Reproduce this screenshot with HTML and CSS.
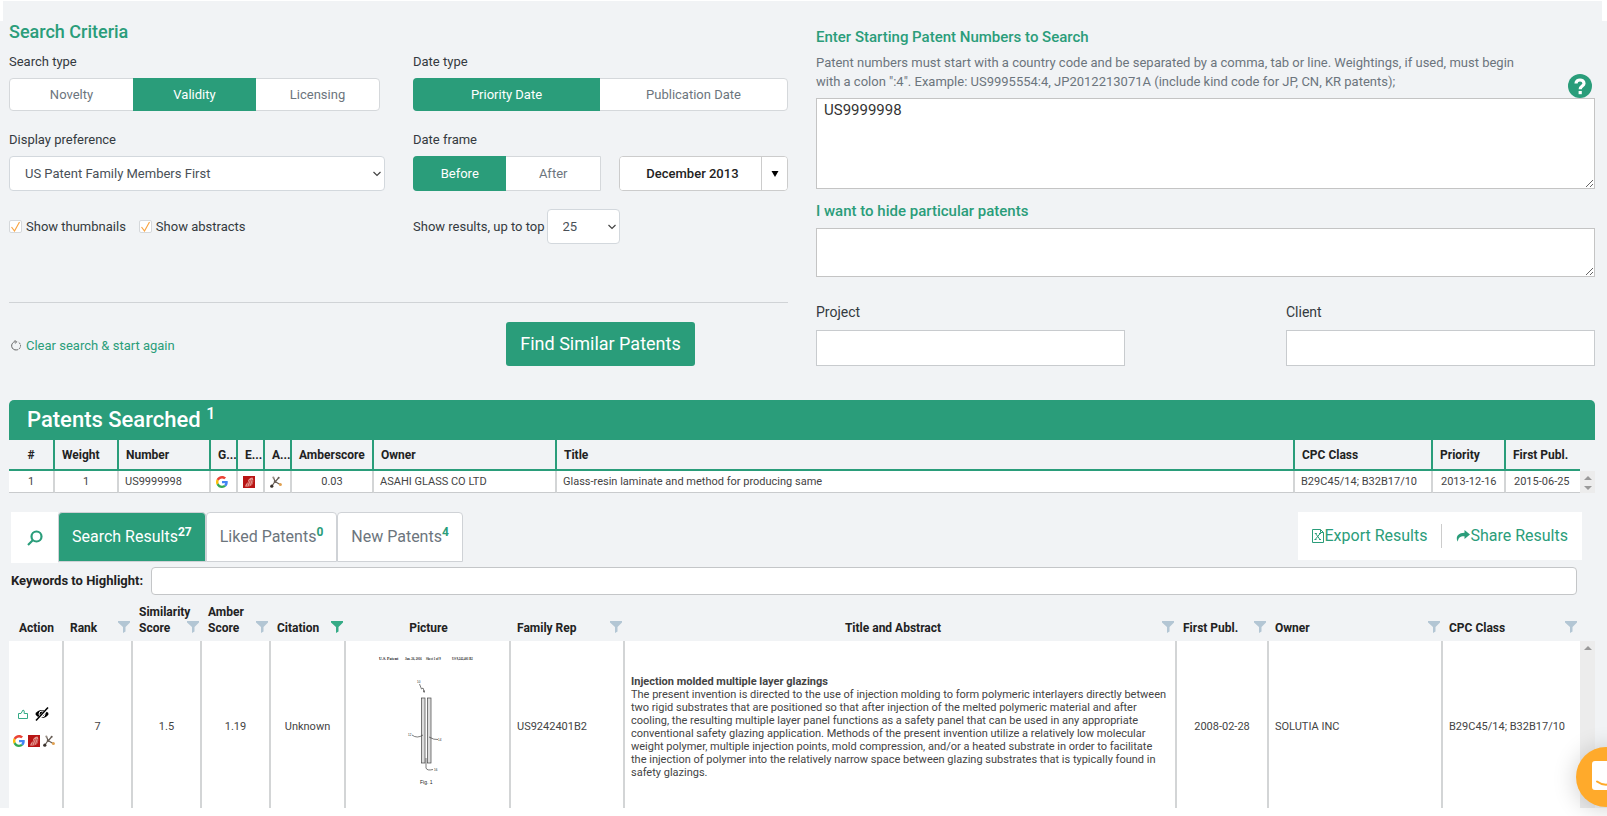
FILE: index.html
```
<!DOCTYPE html>
<html lang="en">
<head>
<meta charset="utf-8">
<title>Patent Search</title>
<link rel="stylesheet" href="styles.css">
</head>
<body>
<svg class="defs" aria-hidden="true">
  <symbol id="google" viewBox="0 0 48 48">
    <path fill="#ea4335" d="M24 9.500c3.500 0 6.700 1.200 9.200 3.600l6.900-6.900C35.900 2.400 30.500 0 24 0 14.600 0 6.500 5.400 2.600 13.200l8 6.200C12.400 13.700 17.700 9.500 24 9.500z"/>
    <path fill="#4285f4" d="M47 24.600c0-1.600-.2-3.100-.4-4.600H24v9h12.900c-.6 3-2.200 5.500-4.700 7.200l7.700 6C44.400 38 47 31.800 47 24.600z"/>
    <path fill="#fbbc05" d="M10.500 28.600c-.5-1.500-.8-3-.8-4.600s.3-3.100.8-4.600l-8-6.200C.9 16.500 0 20.100 0 24s.9 7.500 2.600 10.800z"/>
    <path fill="#34a853" d="M24 48c6.500 0 11.900-2.100 15.900-5.800l-7.700-6c-2.200 1.500-4.900 2.300-8.200 2.300-6.300 0-11.600-4.200-13.500-9.900l-8 6.200C6.500 42.600 14.600 48 24 48z"/>
  </symbol>
  <symbol id="espace" viewBox="0 0 12 12">
    <rect width="12" height="12" fill="#b81414"/>
    <path fill="#e39a92" d="M2 10.500C2.500 8.500 3.500 7 5 6.200 4.800 3.800 6 2 9.500 1.500 10.800 3.500 10.500 7 9 9 7 10.800 4 10.800 2 10.500z"/>
    <path fill="none" stroke="#b81414" stroke-width=".6" d="M4 10.500C4.500 8 5.500 6 7 4M6 10.500C6.500 8 8 5.500 8.500 3.500M8 9.800C8.800 8 9.800 6 9.800 4"/>
  </symbol>
  <symbol id="graph" viewBox="0 0 12 12">
    <path fill="none" stroke="#665c54" stroke-width="1.200" d="M2 10L5 5.500 10.500 8.700M5 5.500L3.500 1.500M5 6L8.500 2"/>
    <circle cx="1.800" cy="10.200" r="1.600" fill="#3a332e"/><circle cx="5" cy="5.700" r="1.200" fill="#665c54"/><circle cx="8.700" cy="1.800" r="1" fill="#665c54"/><circle cx="3.300" cy="1.500" r="1" fill="#998f85"/><circle cx="10.400" cy="8.500" r="1.500" fill="#e0a050"/>
  </symbol>
  <symbol id="funnel" viewBox="0 0 12 12"><path d="M0 0h12v1.500L7.500 6v4.500L5 12V6L0 1.500z"/></symbol>
</svg>

<div class="top-strip"></div>
<main class="page">
  <form class="criteria">
    <section class="left">
      <h2 class="title">Search Criteria</h2>
      <div class="options">
        <div class="field">
          <span class="label">Search type</span>
          <div class="segment segment-type">
            <button type="button">Novelty</button><button type="button" class="on">Validity</button><button type="button">Licensing</button>
          </div>
        </div>
        <div class="field">
          <span class="label">Date type</span>
          <div class="segment">
            <button type="button" class="on">Priority Date</button><button type="button">Publication Date</button>
          </div>
        </div>
        <div class="field">
          <label class="label" for="pref">Display preference</label>
          <span class="select-wrap">
            <select id="pref"><option>US Patent Family Members First</option></select>
            <svg class="caret" viewBox="0 0 8 6"><path d="M.5 1l3.500 3.500L7.500 1"/></svg>
          </span>
        </div>
        <div class="field">
          <span class="label">Date frame</span>
          <div class="frame">
            <div class="segment segment-frame"><button type="button" class="on">Before</button><button type="button">After</button></div>
            <div class="month">
              <input type="text" value="December 2013" aria-label="Month">
              <button type="button" aria-label="Choose month"><svg viewBox="0 0 8 6"><path d="M.5 0h7L4 6z"/></svg></button>
            </div>
          </div>
        </div>
        <div class="checks">
          <label class="check"><input type="checkbox" checked>Show thumbnails</label>
          <label class="check"><input type="checkbox" checked>Show abstracts</label>
        </div>
        <div class="top-n">
          <label for="topn">Show results, up to top</label>
          <span class="select-wrap select-small">
            <select id="topn"><option>25</option></select>
            <svg class="caret" viewBox="0 0 8 6"><path d="M.5 1l3.500 3.500L7.500 1"/></svg>
          </span>
        </div>
      </div>
      <div class="actions">
        <a class="clear" href="#"><svg viewBox="0 0 12 12"><path d="M4.500 1.800A4.500 4.500 0 0 0 6 10.800"/><path stroke-dasharray="2 1" d="M6 10.800A4.500 4.500 0 0 0 7.500 2.100"/><path d="M4 .6l2 1.200-1.200 2"/></svg>Clear search &amp; start again</a>
        <button type="submit" class="find">Find Similar Patents</button>
      </div>
    </section>
    <section class="right">
      <label class="heading" for="numbers">Enter Starting Patent Numbers to Search</label>
      <div class="hint-row">
        <p class="hint">Patent numbers must start with a country code and be separated by a comma, tab or line. Weightings, if used, must begin with a colon ":4". Example: US9995554:4, JP2012213071A (include kind code for JP, CN, KR patents);</p>
        <button type="button" class="help" aria-label="Help"><svg viewBox="0 0 24 24"><circle cx="12" cy="12" r="12"/><path d="M8 9.500C8 4.800 16 4.800 16 9.500c0 2.600-3.800 2.600-3.800 5.700"/><path d="M12.200 17v3.200"/></svg></button>
      </div>
      <textarea id="numbers" class="numbers">US9999998</textarea>
      <label class="heading" for="hide">I want to hide particular patents</label>
      <textarea id="hide" class="hide"></textarea>
      <div class="pair">
        <div class="pair-item"><label for="project">Project</label><input id="project" type="text"></div>
        <div class="pair-item"><label for="client">Client</label><input id="client" type="text"></div>
      </div>
    </section>
  </form>

  <section class="searched">
    <h2 class="banner">Patents Searched <sup>1</sup></h2>
    <div class="scroller">
      <table class="grid grid-searched">
        <colgroup><col class="w46"><col class="w64"><col class="w92"><col class="w27"><col class="w27"><col class="w27"><col class="w82"><col class="w183"><col><col class="w138"><col class="w73"><col class="w74"></colgroup>
        <thead><tr><th class="mid">#</th><th>Weight</th><th>Number</th><th>G...</th><th>E...</th><th>A...</th><th>Amberscore</th><th>Owner</th><th>Title</th><th>CPC Class</th><th>Priority</th><th>First Publ.</th></tr></thead>
        <tbody><tr><td class="mid">1</td><td class="mid">1</td><td>US9999998</td><td class="pic"><svg class="mark"><use href="#google"/></svg></td><td class="pic"><svg class="mark"><use href="#espace"/></svg></td><td class="pic"><svg class="mark"><use href="#graph"/></svg></td><td class="mid">0.03</td><td>ASAHI GLASS CO LTD</td><td>Glass-resin laminate and method for producing same</td><td>B29C45/14; B32B17/10</td><td class="date">2013-12-16</td><td class="date">2015-06-25</td></tr></tbody>
      </table>
      <div class="bar"><svg viewBox="0 0 8 4"><path d="M0 4l4-4 4 4z"/></svg><svg viewBox="0 0 8 4"><path d="M0 0h8L4 4z"/></svg></div>
    </div>
  </section>

  <section class="results">
    <div class="tools">
      <div class="tabs">
        <button type="button" class="lens" aria-label="Search"><svg viewBox="0 0 16 16"><circle cx="9.500" cy="6.500" r="5"/><path d="M6 10l-5 5"/></svg></button>
        <button type="button" class="tab on">Search Results<sup>27</sup></button>
        <button type="button" class="tab">Liked Patents<sup>0</sup></button>
        <button type="button" class="tab">New Patents<sup>4</sup></button>
      </div>
      <div class="export">
        <a href="#"><svg class="xls" viewBox="0 0 12 14"><path d="M.5.500h8l3 3v10H.500zM8.500.500v3h3"/><path d="M3.500 4.500l4.500 6M8.200 4.500l-5 6M2.800 4.500h2M7 4.500h2M2.500 10.500h2M7 10.500h2"/></svg>Export Results</a>
        <a href="#"><svg class="share" viewBox="0 0 14 12"><path d="M8.500 0L14 4.500 8.500 9V6.200C4.500 6 2 7.500 2 11.500 0 10-.5 3 8.500 2.800z"/></svg>Share Results</a>
      </div>
    </div>
    <div class="keywords"><label for="kw">Keywords to Highlight:</label><input id="kw" type="text"></div>
    <div class="scroller">
      <table class="grid grid-results">
        <colgroup><col class="w55"><col class="w69"><col class="w69"><col class="w69"><col class="w75"><col class="w165"><col class="w114"><col><col class="w92"><col class="w174"><col class="w137"></colgroup>
        <thead><tr>
          <th class="mid">Action</th>
          <th><div class="head">Rank<svg class="filter"><use href="#funnel"/></svg></div></th>
          <th><div class="head">Similarity<br>Score<svg class="filter"><use href="#funnel"/></svg></div></th>
          <th><div class="head">Amber<br>Score<svg class="filter"><use href="#funnel"/></svg></div></th>
          <th><div class="head">Citation<svg class="filter active"><use href="#funnel"/></svg></div></th>
          <th class="mid">Picture</th>
          <th><div class="head">Family Rep<svg class="filter"><use href="#funnel"/></svg></div></th>
          <th class="mid"><div class="head head-mid">Title and Abstract<svg class="filter"><use href="#funnel"/></svg></div></th>
          <th><div class="head">First Publ.<svg class="filter"><use href="#funnel"/></svg></div></th>
          <th><div class="head">Owner<svg class="filter"><use href="#funnel"/></svg></div></th>
          <th><div class="head">CPC Class<svg class="filter"><use href="#funnel"/></svg></div></th>
        </tr></thead>
        <tbody><tr>
          <td class="acts">
            <div class="act-row act-wide">
              <svg class="thumb" viewBox="0 0 10 10"><path d="M.5 4.500H3L5 1l1.200.8V4.500h3.300v5H.5z"/></svg>
              <svg class="eye" viewBox="0 0 14 14"><path d="M.3 7C3 1.800 11 1.800 13.700 7 11 12.200 3 12.200.3 7z"/><ellipse cx="7" cy="7" rx="3" ry="3" fill="none" stroke="#fff"/><path stroke="#fff" stroke-width="3" d="M2.500 13L13 1"/><path stroke="#000" stroke-width="1.500" d="M1 13.500L13 .5"/></svg>
            </div>
            <div class="act-row"><svg class="mark"><use href="#google"/></svg><svg class="mark"><use href="#espace"/></svg><svg class="mark"><use href="#graph"/></svg></div>
          </td>
          <td class="mid">7</td><td class="mid">1.5</td><td class="mid">1.19</td><td class="mid">Unknown</td>
          <td class="pic pic-large">
            <svg class="drawing" viewBox="0 0 100 140" role="img" aria-label="Patent drawing">
              <g font-family="Liberation Serif, serif" font-size="4" font-weight="bold" fill="#222"><text x="3" y="8">U.S. Patent</text><text x="29" y="8" font-size="3">Jan. 26, 2016</text><text x="50" y="8" font-size="3">Sheet 1 of 9</text><text x="76" y="8" font-size="3">US 9,242,401 B2</text></g>
              <g fill="none" stroke="#444" stroke-width=".7"><rect x="45.500" y="46" width="3.500" height="65" fill="#ddd"/><rect x="51.500" y="46" width="3.500" height="65" fill="#ddd"/><path d="M43.500 32l2 5 1.500-1 1.500 4M48 38l-.5 2 1.500 0M36 83q5 4 11 0M53 85q5 3 9 2.500M50 106v10q1 3 7 1.500"/></g>
              <g font-family="Liberation Sans, sans-serif" font-size="3" fill="#222"><text x="41" y="31">10</text><text x="32" y="84">12</text><text x="62" y="89">14</text><text x="58" y="119">16</text></g>
              <text x="44" y="132" font-family="Liberation Sans, sans-serif" font-size="5" fill="#222">Fig. 1</text>
            </svg>
          </td>
          <td>US9242401B2</td>
          <td class="abstract"><strong>Injection molded multiple layer glazings</strong><br>The present invention is directed to the use of injection molding to form polymeric interlayers directly between two rigid substrates that are positioned so that after injection of the melted polymeric material and after cooling, the resulting multiple layer panel functions as a safety panel that can be used in any appropriate conventional safety glazing application. Methods of the present invention utilize a relatively low molecular weight polymer, multiple injection points, mold compression, and/or a heated substrate in order to facilitate the injection of polymer into the relatively narrow space between glazing substrates that is typically found in safety glazings.</td>
          <td class="mid">2008-02-28</td><td>SOLUTIA INC</td><td>B29C45/14; B32B17/10</td>
        </tr></tbody>
      </table>
      <div class="bar"><svg viewBox="0 0 8 4"><path d="M0 4l4-4 4 4z"/></svg></div>
    </div>
  </section>
</main>
<button type="button" class="chat" aria-label="Open chat"><svg viewBox="0 0 28 32"><path fill="#fff" d="M3 0h22a3 3 0 0 1 3 3v29l-6-3H3a3 3 0 0 1-3-3V3a3 3 0 0 1 3-3z"/><path fill="none" stroke="#ffaa2b" stroke-width="2" stroke-linecap="round" d="M5 20.500q9 6.500 18 0"/></svg></button>
</body>
</html>
```
FILE: styles.css
```
* { box-sizing: border-box; }
body { margin: 0; background: #fff; color: #343a40; font: 13px/16px Roboto, sans-serif; overflow: hidden; }
button, input, select, textarea { font: inherit; color: inherit; margin: 0; border-radius: 0; }
button { cursor: pointer; padding: 0; border: 0; background: #fff; }
a { color: #2a9d7a; text-decoration: none; }
svg { display: block; flex: none; }
.defs { display: none; }

.top-strip { height: 20px; margin: 1px 5px 0 3px; background: #f1f3f5; }
.page { background: #f1f3f5; padding: 0 12px 0 9px; }

.criteria { display: grid; grid-template-columns: 779fr 779fr; gap: 28px; height: 379px; }
.title { margin: 0; font-size: 18px; line-height: 22px; font-weight: 500; color: #2a9d7a; }
.options { display: grid; grid-template-columns: 376fr 375fr; column-gap: 28px; padding: 10px 0 58px; border-bottom: 1px solid #d0d3d6; }
.label { display: block; line-height: 18px; margin-bottom: 7px; }
.field { height: 78px; }
.segment { display: flex; height: 33px; border: 1px solid #d5d8db; border-radius: 4px; background: #fff; }
.segment-type { margin-right: 5px; }
.segment button { flex: 1; color: #6c757d; background: none; }
.segment .on { background: #2a9d7a; color: #fff; margin: -1px 0; }
.segment .on:first-child { margin-left: -1px; border-radius: 4px 0 0 4px; }
.frame { display: flex; gap: 18px; }
.segment-frame { flex: 188; height: 35px; border-radius: 4px 0 0 4px; }
.month { flex: 169; display: flex; height: 35px; border: 1px solid #ccc; border-radius: 4px; background: #fff; overflow: hidden; }
.month input { flex: 1; min-width: 0; border: 0; padding: 0 0 0 4px; text-align: center; font-weight: 500; color: #222; }
.month button { width: 26px; border-left: 1px solid #ccc; display: grid; place-items: center; }
.month svg { width: 8px; height: 6px; }
.select-wrap { position: relative; display: block; }
.select-wrap select { appearance: none; width: 100%; height: 35px; padding: 0 15px; border: 1px solid #d3d8dd; border-radius: 4px; background: #fff; color: #495057; }
.caret { position: absolute; right: 4px; top: 15px; width: 8px; height: 6px; fill: none; stroke: #444; stroke-width: 1.2; pointer-events: none; }
.select-small { width: 73px; }
.checks { display: flex; gap: 13px; align-items: center; height: 35px; }
.check { display: flex; gap: 4px; align-items: center; }
.check input { appearance: none; width: 13px; height: 13px; border: 1px solid #d5d8db; border-radius: 2px; background: #fff url("data:image/svg+xml,%3Csvg xmlns='http://www.w3.org/2000/svg' viewBox='0 0 11 11'%3E%3Cpath d='M1.500 6l3 4L9.500 1' fill='none' stroke='%23f9a646' stroke-width='1.200'/%3E%3C/svg%3E"); }
.top-n { display: flex; gap: 2px; align-items: center; height: 35px; }
.actions { display: flex; align-items: center; padding: 19px 93px 0 2px; justify-content: space-between; }
.clear { display: flex; gap: 4px; align-items: center; padding-top: 3px; }
.clear svg { width: 11px; height: 11px; fill: none; stroke: #555; stroke-width: 1; }
.find { width: 189px; height: 44px; border-radius: 3px; background: #2a9d7a; color: #fff; font-size: 18px; }

.right { display: flex; flex-direction: column; padding-top: 6px; }
.heading { font-size: 15px; line-height: 20px; font-weight: 500; color: #2a9d7a; }
.hint-row { display: flex; justify-content: space-between; align-items: flex-end; padding: 6px 3px 0 0; }
.hint { margin: 0 0 7px; max-width: 700px; line-height: 19px; color: #6c757d; }
.help { background: none; }
.help svg { width: 24px; height: 24px; fill: #2a9d7a; }
.help path { fill: none; stroke: #fff; stroke-width: 3.200; }
textarea { border: 1px solid #c4c4c4; padding: 2px 7px; background: #fff; color: #333; font-size: 15px; line-height: 18px; }
.numbers { height: 91px; margin-bottom: 12px; }
.hide { height: 49px; margin-top: 7px; }
.pair { display: flex; justify-content: space-between; padding-top: 26px; font-size: 14px; line-height: 18px; }
.pair-item { width: 309px; }
.pair-item label { display: block; margin-bottom: 9px; }
.pair-item input { display: block; width: 100%; height: 36px; border: 1px solid #c8cbce; background: #fff; }

.banner { margin: 0; height: 40px; padding: 0 18px; border-radius: 5px 5px 0 0; background: #2a9d7a; color: #fff; font-size: 22px; line-height: 40px; font-weight: 500; }
.banner sup { font-size: 16px; line-height: 0; vertical-align: 8px; }
.scroller { display: flex; }
.grid { flex: 1; width: 100%; min-width: 0; table-layout: fixed; border-collapse: separate; border-spacing: 0; font-size: 11px; line-height: 16px; }
.grid th { text-align: left; font-weight: 700; font-size: 12px; color: #222; white-space: nowrap; }
.grid td { background: #fff; padding: 0 6px; border-right: 2px solid #d3d5d6; color: #444; }
.grid td:last-child, .grid th:last-child { border-right: 0; }
.grid .mid { text-align: center; }
.grid-searched th { height: 31px; padding: 0 0 0 7px; border-right: 2px solid #2a9d7a; border-bottom: 2px solid #2a9d7a; overflow: hidden; }
.grid-searched th.mid { padding: 0; }
.grid-searched td { height: 22px; border-bottom: 1px solid #c9cbcd; white-space: nowrap; }
.grid-searched .date { padding-left: 8px; }
.grid .pic { padding: 0 4px 0 0; }
.grid .pic-large { padding: 0 4px 6px 0; }
.pic svg { margin: 0 auto; }
.mark { width: 12px; height: 12px; }
.bar { width: 15px; margin-top: 31px; background: #ececec; display: flex; flex-direction: column; align-items: center; gap: 6px; padding-top: 5px; fill: #999; }
.bar svg { width: 8px; height: 4px; }
.w27 { width: 27px; }
.w46 { width: 46px; }
.w55 { width: 55px; }
.w64 { width: 64px; }
.w69 { width: 69px; }
.w73 { width: 73px; }
.w74 { width: 74px; }
.w75 { width: 75px; }
.w82 { width: 82px; }
.w92 { width: 92px; }
.w114 { width: 114px; }
.w137 { width: 137px; }
.w138 { width: 138px; }
.w165 { width: 165px; }
.w174 { width: 174px; }
.w183 { width: 183px; }

.tools { display: flex; justify-content: space-between; padding: 19px 13px 0 2px; }
.tabs { display: flex; align-items: flex-start; }
.lens { width: 47px; height: 51px; display: grid; place-items: center; }
.lens svg { width: 16px; height: 16px; fill: none; stroke: #2a9d7a; stroke-width: 2.2; }
.tab { height: 50px; padding: 0 13px; border: 1px solid #cfd2d6; border-radius: 4px 4px 0 0; font-size: 16px; color: #6c757d; }
.tab sup { font-size: 12px; line-height: 0; font-weight: 700; color: #2a9d7a; }
.tab.on, .tab.on sup { background: #2a9d7a; color: #fff; }
.export { display: flex; align-items: center; height: 48px; background: #fff; font-size: 16px; }
.export a { display: flex; align-items: center; padding: 4px 14px; }
.export a + a { border-left: 1px solid #ccc; }
.xls { width: 12px; height: 14px; fill: none; stroke: #2a9d7a; }
.share { width: 14px; height: 12px; fill: #2a9d7a; }
.keywords { display: flex; align-items: center; gap: 8px; padding: 4px 18px 0 2px; font-weight: 700; color: #222; }
.keywords input { flex: 1; height: 28px; border: 1px solid #c4c6c8; border-radius: 4px; background: #fff; }

.grid-results th { height: 46px; padding: 0 6px 5px; vertical-align: bottom; }
.head { position: relative; }
.head-mid { padding-right: 16px; }
.filter { position: absolute; right: -3px; bottom: 3px; width: 12px; height: 12px; fill: #b3c6d4; }
.filter.active { fill: #35ab86; }
.grid-results td { height: 167px; padding-top: 4px; }
.results .bar { margin-top: 46px; }
.grid-results .acts { padding: 6px 8px 0 4px; }
.act-row { display: flex; justify-content: center; align-items: center; gap: 3px; height: 27px; }
.act-wide { gap: 7px; }
.thumb { width: 10px; height: 10px; fill: none; stroke: #35ab86; stroke-width: 1; }
.eye { width: 14px; height: 14px; }
.drawing { width: 100px; height: 140px; }
.grid-results .abstract { line-height: 13px; padding-top: 4px; }
.chat { position: fixed; left: calc(100% - 31px); bottom: 9px; width: 60px; height: 60px; border-radius: 50%; background: #ffaa2b; display: grid; place-items: center; box-shadow: 0 2px 24px rgba(0, 0, 0, .2); }
.chat svg { width: 28px; height: 32px; }
```
